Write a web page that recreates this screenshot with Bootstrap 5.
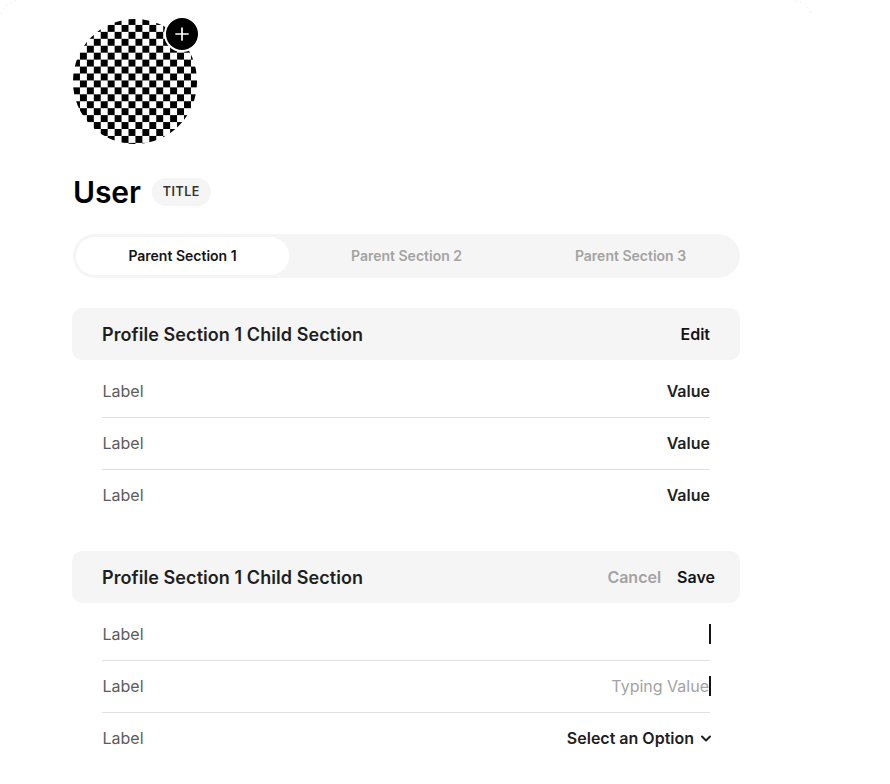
<!DOCTYPE html>
<html lang="en"><head><meta charset="utf-8">
<link href="https://cdn.jsdelivr.net/npm/bootstrap@5.3.0/dist/css/bootstrap.min.css" rel="stylesheet">
<style>
html,body{height:784px;overflow:hidden;background:#fff}
body{font-family:Inter,"Liberation Sans",sans-serif;color:#1f1f1f;position:relative}
.corner-marks{position:absolute;left:0;top:0}
.pg{width:668px;margin-left:72px;padding-top:19px}
.avatar-wrap{width:124px;height:125px;position:relative;margin-left:1px}
.avatar-disc{width:124px;height:125px;border-radius:50%;background-color:#fff;background-image:conic-gradient(#fff 25%,#000 0 50%,#fff 0 75%,#000 0);background-size:13.88px 13.88px;background-position:0 -1px}
.add-btn{position:absolute;top:-3px;right:-3px;width:36px;height:36px;border-radius:50%;background:#000;border:2.5px solid #fff;display:flex;align-items:center;justify-content:center}
.head-row{margin-top:29px;height:38px;margin-left:1px}
.u-title{font-size:30px;font-weight:600;color:#000;line-height:38px;margin:0;letter-spacing:-.1px}
.u-tag{height:28px;border-radius:14px;background:#f5f5f5;padding:0 11px;font-size:12.5px;font-weight:600;letter-spacing:.45px;line-height:28px;color:#333;margin-left:11px}
.seg{margin-top:23px;height:44px;border-radius:22px;background:#f5f5f5;padding:3px;margin-left:1px;gap:11px}
.seg-item{flex:1 1 0;display:flex;align-items:center;justify-content:center;font-size:14px;font-weight:600;color:#a3a3a3;border-radius:19px;padding-bottom:1px}
.seg-item.on{background:#fff;color:#141414}
.sec-head{height:52px;border-radius:10px;background:#f5f5f5;padding:0 30px;font-size:18px;font-weight:600;color:#1f1f1f}
.sec-head.editing{padding-right:25px}
.sec-name{letter-spacing:.07px}
.act{font-size:16px;font-weight:600}
.act-mute{color:#a3a3a3}
.act-dark{color:#141414}
.rows{margin:0 30px;padding-top:5px}
.rw{height:53px;font-size:16px;border-bottom:1px solid #e0e0e0;padding-bottom:0;margin-bottom:-1px}
.rw:last-child{border-bottom:0;height:52px;margin-bottom:0}
.lbl{color:#5c5c5c;font-weight:400;padding-left:.5px}
.val{font-weight:600;color:#1f1f1f}
.caret{width:2px;height:20px;background:#141414;display:inline-block;margin-right:-1px}
.typing{color:#a3a3a3}
.chev{margin-left:6px;margin-right:-2px}
.sec1,.sec2{margin-top:30px}
</style></head><body>
<svg class="corner-marks" width="890" height="20" viewBox="0 0 890 20" fill="none" stroke="#ddd" stroke-width="1" stroke-dasharray="1 4" aria-hidden="true"><path d="M1 14Q5 3 18 0M795 0Q808 3 811 14"/></svg>
<main class="pg">
<div class="avatar-wrap"><div class="avatar-disc"></div>
<div class="add-btn"><svg width="14" height="14" viewBox="0 0 14 14" fill="none" stroke="#fff" stroke-width="1.7" stroke-linecap="round"><path d="M7 1v12M1 7h12"/></svg></div></div>
<div class="d-flex align-items-center head-row"><h1 class="u-title">User</h1><span class="u-tag">TITLE</span></div>
<div class="d-flex seg"><div class="seg-item on">Parent Section 1</div><div class="seg-item">Parent Section 2</div><div class="seg-item">Parent Section 3</div></div>
<section class="sec1">
<div class="d-flex justify-content-between align-items-center sec-head"><span class="sec-name">Profile Section 1 Child Section</span><span class="act act-dark">Edit</span></div>
<div class="rows">
<div class="d-flex justify-content-between align-items-center rw"><span class="lbl">Label</span><span class="val">Value</span></div>
<div class="d-flex justify-content-between align-items-center rw"><span class="lbl">Label</span><span class="val">Value</span></div>
<div class="d-flex justify-content-between align-items-center rw"><span class="lbl">Label</span><span class="val">Value</span></div>
</div></section>
<section class="sec2">
<div class="d-flex justify-content-between align-items-center sec-head editing"><span class="sec-name">Profile Section 1 Child Section</span><span class="d-flex gap-3 act"><span class="act-mute">Cancel</span><span class="act-dark">Save</span></span></div>
<div class="rows">
<div class="d-flex justify-content-between align-items-center rw"><span class="lbl">Label</span><span class="caret"></span></div>
<div class="d-flex justify-content-between align-items-center rw"><span class="lbl">Label</span><span class="d-flex align-items-center"><span class="typing">Typing Value</span><span class="caret"></span></span></div>
<div class="d-flex justify-content-between align-items-center rw"><span class="lbl">Label</span><span class="d-flex align-items-center val">Select an Option<svg class="chev" width="12" height="12" viewBox="0 0 12 12" fill="none" stroke="#1f1f1f" stroke-width="2" stroke-linecap="round" stroke-linejoin="round"><path d="M2 4.5 6 8.5l4-4"/></svg></span></div>
</div></section>
</main>
<script src="https://cdn.jsdelivr.net/npm/bootstrap@5.3.0/dist/js/bootstrap.bundle.min.js"></script>
</body></html>
